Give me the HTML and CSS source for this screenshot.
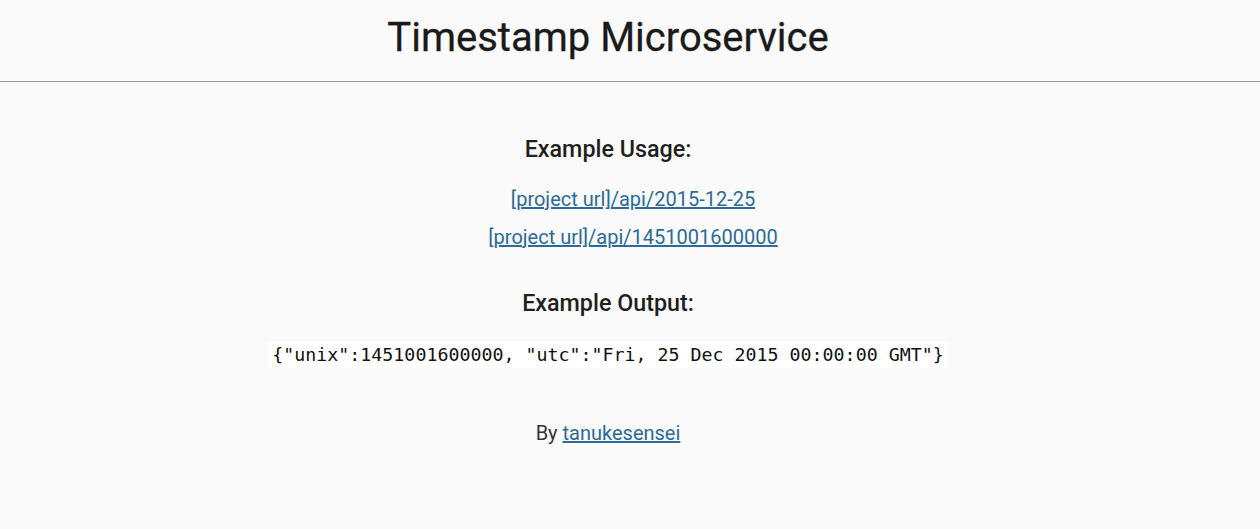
FILE: index.html
```html
<!DOCTYPE html>
<html>
<head>
<meta charset="utf-8">
<title>Timestamp Microservice</title>
<link rel="stylesheet" href="styles.css">
</head>
<body>
<header class="header">
  <h1 class="title">Timestamp Microservice</h1>
</header>
<main class="container">
  <h3 class="heading">Example Usage:</h3>
  <ul class="links">
    <li><a href="#">[project url]/api/2015-12-25</a></li>
    <li><a href="#">[project url]/api/1451001600000</a></li>
  </ul>
  <h3 class="heading heading-output">Example Output:</h3>
  <p class="output"><code class="code">{"unix":1451001600000, "utc":"Fri, 25 Dec 2015 00:00:00 GMT"}</code></p>
</main>
<footer class="footer">
  <p class="byline">By <a href="#">tanukesensei</a></p>
</footer>
</body>
</html>
```
FILE: styles.css
```css
html, body {
  margin: 0;
  padding: 0;
}
body {
  background: #fafafa;
  color: #222;
  font-family: Roboto, "Noto Sans", sans-serif;
  text-align: center;
}
.header {
  border-bottom: 1px solid #999;
  height: 81px;
  display: flex;
  justify-content: center;
  align-items: center;
  padding-right: 44px;
}
.title {
  margin: 0;
  font-size: 40px;
  font-weight: 400;
  color: #1a1a1a;
  padding-bottom: 6px;
  -webkit-text-stroke: 0.3px #1a1a1a;
}
.container {
  padding-top: 52px;
  padding-right: 44px;
}
.heading {
  margin: 0;
  font-size: 23.3px;
  font-weight: 500;
  line-height: 30px;
  color: #1f1f1f;
}
.links {
  list-style: none;
  margin: 16px 0 0;
  padding: 0 0 0 50px;
}
.links li {
  font-size: 20px;
  line-height: 38px;
}
a {
  color: #2d6a96;
}
.heading-output {
  margin-top: 32px;
}
.output {
  margin: 26px 0 0;
}
.code {
  background: #fff;
  font-family: "DejaVu Sans Mono", monospace;
  font-size: 18.3px;
  color: #111;
  padding: 3px 4px;
}
.footer {
  padding-top: 56px;
  padding-right: 44px;
}
.byline {
  margin: 0;
  font-size: 20px;
  color: #333;
}
```
